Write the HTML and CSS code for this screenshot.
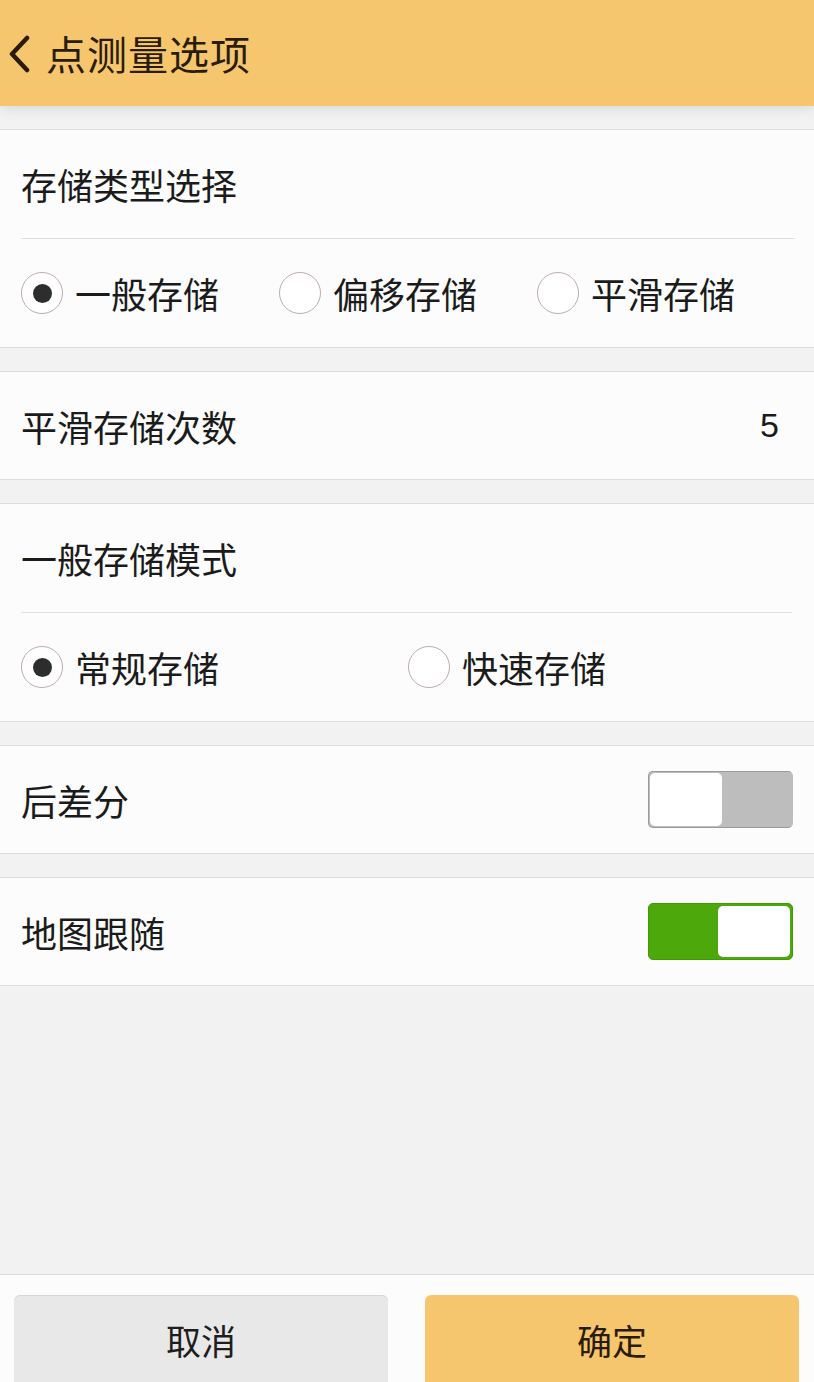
FILE: index.html
```html
<!DOCTYPE html>
<html lang="zh-CN">
<head>
<meta charset="utf-8">
<title>点测量选项</title>
<link rel="stylesheet" href="styles.css">
</head>
<body>
<div class="app">
  <header class="topbar">
    <svg class="back" width="24" height="40" viewBox="0 0 24 40">
      <polyline points="18,4 3,20 18,36" fill="none" stroke="#2b1c0a" stroke-width="4.5" stroke-linecap="round" stroke-linejoin="round"/>
    </svg>
    <h1 class="title">点测量选项</h1>
  </header>

  <main class="content">
    <section class="card">
      <div class="row">存储类型选择</div>
      <div class="divider"></div>
      <div class="row radios three">
        <label class="radio"><span class="dot on"></span>一般存储</label>
        <label class="radio"><span class="dot"></span>偏移存储</label>
        <label class="radio"><span class="dot"></span>平滑存储</label>
      </div>
    </section>

    <section class="card">
      <div class="row single spread"><span>平滑存储次数</span><span class="num">5</span></div>
    </section>

    <section class="card">
      <div class="row">一般存储模式</div>
      <div class="divider short"></div>
      <div class="row radios two">
        <label class="radio"><span class="dot on"></span>常规存储</label>
        <label class="radio"><span class="dot"></span>快速存储</label>
      </div>
    </section>

    <section class="card">
      <div class="row single spread"><span>后差分</span><span class="toggle off"><span class="knob"></span></span></div>
    </section>

    <section class="card">
      <div class="row single spread"><span>地图跟随</span><span class="toggle on"><span class="knob"></span></span></div>
    </section>
  </main>

  <footer class="footer">
    <button class="btn cancel">取消</button>
    <button class="btn ok">确定</button>
  </footer>
</div>
</body>
</html>
```

FILE: styles.css
```css
* { box-sizing: border-box; }
html, body { margin: 0; padding: 0; }
body {
  font-family: "Noto Sans CJK SC", "Noto Sans", sans-serif;
  background: #f3f2f3;
  color: #1b1b1b;
}
.app {
  height: 1382px;
  display: flex;
  flex-direction: column;
  overflow: hidden;
}
.topbar {
  height: 106px;
  flex: none;
  background: #f5c66d;
  display: flex;
  align-items: center;
  padding-left: 9px;
  box-shadow: 0 3px 12px rgba(0,0,0,0.10);
  position: relative;
  z-index: 1;
}
.back { margin-right: 13px; margin-top: 2px; }
.title {
  margin: 0;
  font-size: 40px;
  font-weight: 400;
  color: #2a1c0a;
  letter-spacing: 1px;
}
.content {
  flex: 1;
  padding-top: 23px;
}
.card {
  background: #fcfcfc;
  border-top: 1px solid #dcdcdc;
  border-bottom: 1px solid #dcdcdc;
  margin-bottom: 23px;
}
.row {
  height: 108px;
  display: flex;
  align-items: center;
  padding: 0 21px;
  font-size: 36px;
}
.row.single { height: 107px; }
.spread { justify-content: space-between; padding-right: 21px; }
.num {
  font-family: "Liberation Sans", sans-serif;
  font-size: 34px;
  margin-right: 14px;
}
.divider {
  height: 1px;
  background: #e0e0e0;
  margin: 0 19px 0 21px;
}
.divider.short { margin-right: 22px; }
.radios { display: grid; padding-right: 19px; }
.radios.three { grid-template-columns: repeat(3, 1fr); }
.radios.two { grid-template-columns: repeat(2, 1fr); }
.radio {
  display: flex;
  align-items: center;
  font-size: 36px;
}
.dot {
  width: 42px;
  height: 42px;
  border: 1.5px solid #bcadad;
  border-radius: 50%;
  margin-right: 12px;
  display: flex;
  align-items: center;
  justify-content: center;
  background: #fff;
}
.dot.on::after {
  content: "";
  width: 19px;
  height: 19px;
  border-radius: 50%;
  background: #2d2d2d;
}
.toggle {
  width: 145px;
  height: 57px;
  border-radius: 5px;
  display: flex;
  padding: 2px;
}
.toggle .knob {
  width: 72px;
  height: 100%;
  background: #fff;
  border-radius: 5px;
}
.toggle.off {
  background: #bdbdbd;
  border: 1px solid #9a9a9a;
  border-right-color: #bdbdbd;
  padding: 1px;
}
.toggle.on {
  background: #4ca80b;
  justify-content: flex-end;
  border: 1px solid #3f9a05;
}
.footer {
  flex: none;
  height: 108px;
  background: #fcfcfc;
  border-top: 1px solid #dadada;
  display: flex;
  gap: 37px;
  padding: 20px 15px 0 14px;
  overflow: hidden;
}
.btn {
  flex: 1;
  height: 92px;
  border: none;
  border-radius: 6px;
  font-family: "Noto Sans CJK SC", "Noto Sans", sans-serif;
  font-size: 35px;
  color: #1e1e1e;
  padding: 0 0 4px;
  display: flex;
  align-items: center;
  justify-content: center;
}
.cancel { background: #e8e8e8; box-shadow: inset 0 1px 0 #d6d6d6; }
.ok { background: #f5c66d; color: #2a1c0a; }
```
